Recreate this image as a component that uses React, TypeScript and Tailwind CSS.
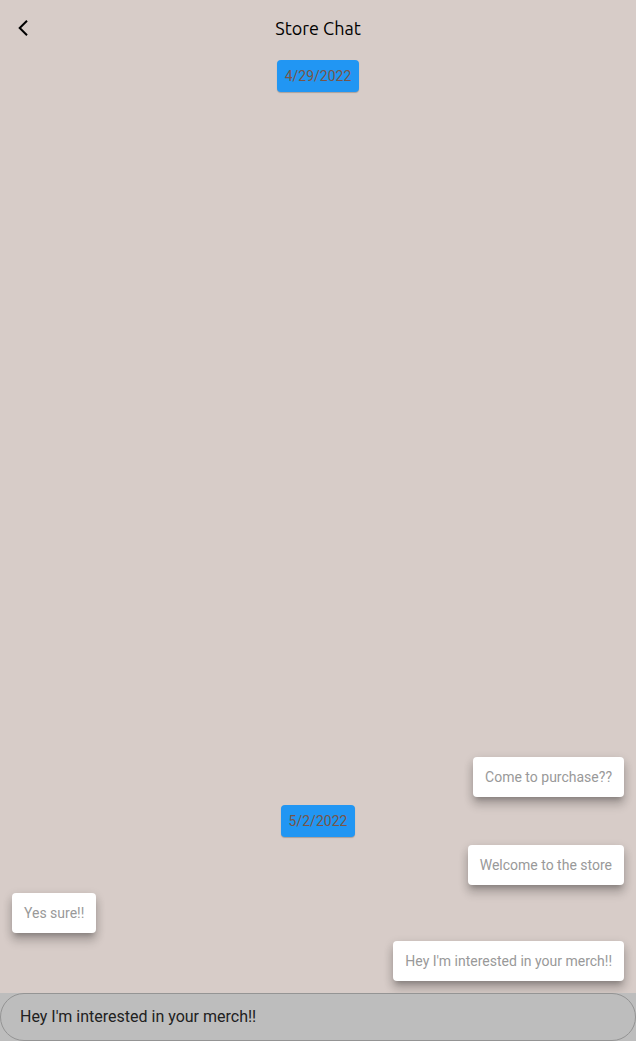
import { useState } from "react";

type Entry =
  | { kind: "date"; text: string }
  | { kind: "message"; text: string; mine: boolean };

const entries: Entry[] = [
  { kind: "message", text: "Come to purchase??", mine: true },
  { kind: "date", text: "5/2/2022" },
  { kind: "message", text: "Welcome to the store", mine: true },
  { kind: "message", text: "Yes sure!!", mine: false },
  { kind: "message", text: "Hey I'm interested in your merch!!", mine: true },
];

function DateChip({ text }: { text: string }) {
  return (
    <time className="self-center rounded bg-[#2196f3] p-2 text-sm leading-4 text-[#795548] shadow-[0_1px_1px_rgba(0,0,0,0.22)]">
      {text}
    </time>
  );
}

function Bubble({ text, mine }: { text: string; mine: boolean }) {
  return (
    <p
      className={`${mine ? "self-end" : "self-start"} rounded bg-white p-3 text-sm leading-4 text-[#999999] shadow-[0_5px_5px_-3px_rgba(0,0,0,0.2),0_8px_10px_1px_rgba(0,0,0,0.14),0_3px_10px_1px_rgba(0,0,0,0.12)]`}
    >
      {text}
    </p>
  );
}

export default function App() {
  const [draft, setDraft] = useState("Hey I'm interested in your merch!!");

  return (
    <div className="flex min-h-screen flex-col bg-[#d7ccc8] font-['Roboto',sans-serif]">
      <header className="grid h-14 grid-cols-[48px_1fr_48px] items-center">
        <button type="button" aria-label="Back" className="flex h-12 items-center justify-center">
          <svg viewBox="0 0 24 24" className="size-6" fill="none" stroke="black" strokeWidth="2">
            <path d="M15 4.7 7.7 12l7.3 7.3" />
          </svg>
        </button>
        <h1 className="text-center font-['Ubuntu','Noto_Sans',sans-serif] text-lg text-black">
          Store Chat
        </h1>
      </header>

      <main className="flex flex-1 flex-col justify-between px-3 pt-1 pb-3">
        <DateChip text="4/29/2022" />
        <div className="flex flex-col gap-2">
          {entries.map((entry) =>
            entry.kind === "date" ? (
              <DateChip key={entry.text} text={entry.text} />
            ) : (
              <Bubble key={entry.text} text={entry.text} mine={entry.mine} />
            ),
          )}
        </div>
      </main>

      <footer className="flex bg-[#bdbdbd]">
        <input
          type="text"
          aria-label="Message"
          value={draft}
          onChange={(event) => setDraft(event.target.value)}
          className="h-12 w-full rounded-full border border-[#949494] bg-transparent px-[19px] pb-0.5 text-base text-[#212121] outline-none"
        />
      </footer>
    </div>
  );
}
